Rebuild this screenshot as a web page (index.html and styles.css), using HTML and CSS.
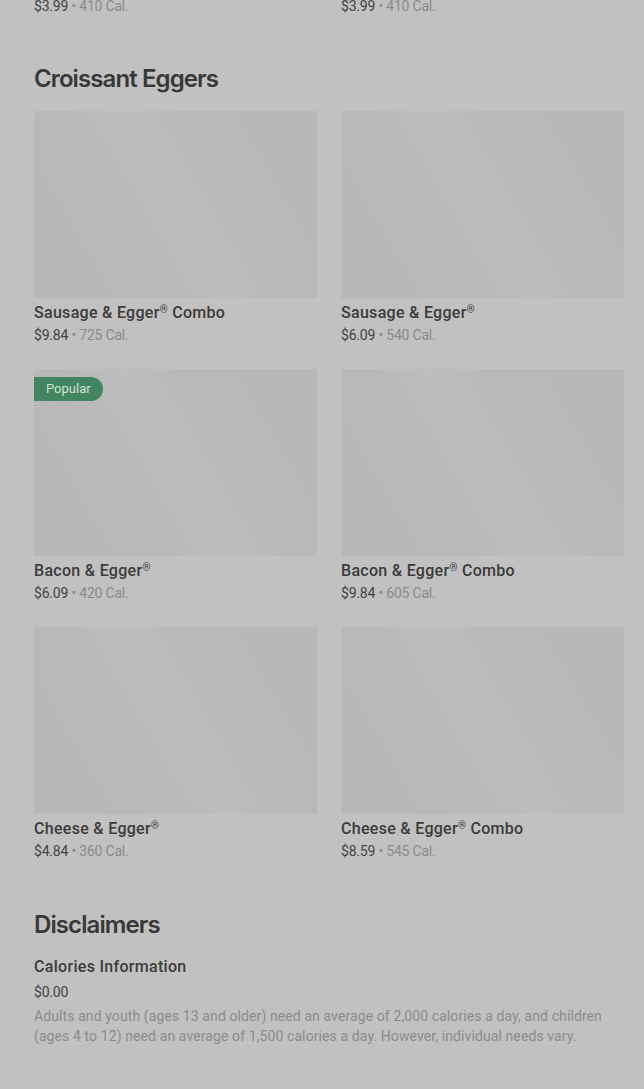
FILE: index.html
```html
<!DOCTYPE html>
<html lang="en">
<head>
  <meta charset="UTF-8" />
  <meta name="viewport" content="width=device-width, initial-scale=1.0"/>
  <title>Croissant Eggers</title>
  <link rel="stylesheet" href="styles.css">
</head>
<body>

  <div class="menu">
    <div class="grid top-row">
      <p class="price">$3.99 <span class="cal">• 410 Cal.</span></p>
      <p class="price">$3.99 <span class="cal">• 410 Cal.</span></p>
    </div>

    <h2 class="section-title">Croissant Eggers</h2>
    <div class="grid">
      <div class="item">
        <div class="thumb"></div>
        <p class="name">Sausage &amp; Egger<span class="reg">®</span> Combo</p>
        <p class="price">$9.84 <span class="cal">• 725 Cal.</span></p>
      </div>
      <div class="item">
        <div class="thumb"></div>
        <p class="name">Sausage &amp; Egger<span class="reg">®</span></p>
        <p class="price">$6.09 <span class="cal">• 540 Cal.</span></p>
      </div>
      <div class="item">
        <div class="thumb">
          <span class="badge">Popular</span>
        </div>
        <p class="name">Bacon &amp; Egger<span class="reg">®</span></p>
        <p class="price">$6.09 <span class="cal">• 420 Cal.</span></p>
      </div>
      <div class="item">
        <div class="thumb"></div>
        <p class="name">Bacon &amp; Egger<span class="reg">®</span> Combo</p>
        <p class="price">$9.84 <span class="cal">• 605 Cal.</span></p>
      </div>
      <div class="item">
        <div class="thumb"></div>
        <p class="name">Cheese &amp; Egger<span class="reg">®</span></p>
        <p class="price">$4.84 <span class="cal">• 360 Cal.</span></p>
      </div>
      <div class="item">
        <div class="thumb"></div>
        <p class="name">Cheese &amp; Egger<span class="reg">®</span> Combo</p>
        <p class="price">$8.59 <span class="cal">• 545 Cal.</span></p>
      </div>
    </div>

    <h2 class="section-title disclaimers-title">Disclaimers</h2>
    <div class="disclaimer">
      <p class="name">Calories Information</p>
      <p class="price">$0.00</p>
      <p class="note">Adults and youth (ages 13 and older) need an average of 2,000 calories a day, and children (ages 4 to 12) need an average of 1,500 calories a day. However, individual needs vary.</p>
    </div>
  </div>

</body>
</html>
```

FILE: styles.css
```css
body {
  margin: 0;
  background-color: #c1c1c1;
  font-family: Roboto, "Liberation Sans", sans-serif;
  color: #3b3b3b;
}

p {
  margin: 0;
}

.menu {
  padding: 0 20px 40px 34px;
}

.grid {
  display: grid;
  grid-template-columns: 1fr 1fr;
  column-gap: 24px;
  row-gap: 24px;
}

.top-row {
  margin-top: -6px;
}

.section-title {
  font-family: Inter, "Noto Sans", sans-serif;
  font-size: 24px;
  font-weight: 600;
  letter-spacing: -0.9px;
  line-height: 32px;
  color: #383838;
  margin: 47px 0 16px;
}

.disclaimers-title {
  margin-top: 48px;
}

.thumb {
  position: relative;
  height: 187px;
  background: linear-gradient(60deg, #b7b7b7 0%, #b9b9b9 35%, #bdbdbd 50%, #b9b9b9 65%, #b7b7b7 100%);
}

.badge {
  position: absolute;
  top: 8px;
  left: 0;
  height: 24px;
  line-height: 24px;
  padding: 0 12px;
  background-color: #418660;
  color: #d3e3da;
  font-size: 13px;
  border-radius: 0 12px 12px 0;
}

.name {
  font-size: 16px;
  font-weight: 500;
  line-height: 20px;
  letter-spacing: 0.3px;
  color: #3b3b3b;
  margin-top: 5px;
}

.reg {
  font-size: 10px;
  vertical-align: 5px;
  line-height: 0;
}

.price {
  font-size: 14px;
  line-height: 20px;
  letter-spacing: -0.2px;
  color: #434343;
  margin-top: 2px;
}

.cal {
  color: #8b8b8b;
}

.disclaimer .name {
  margin-top: 0;
}

.disclaimer .price {
  margin-top: 5px;
}

.note {
  font-size: 14px;
  line-height: 20px;
  letter-spacing: 0.1px;
  color: #8b8b8b;
  margin-top: 4px;
}
```
